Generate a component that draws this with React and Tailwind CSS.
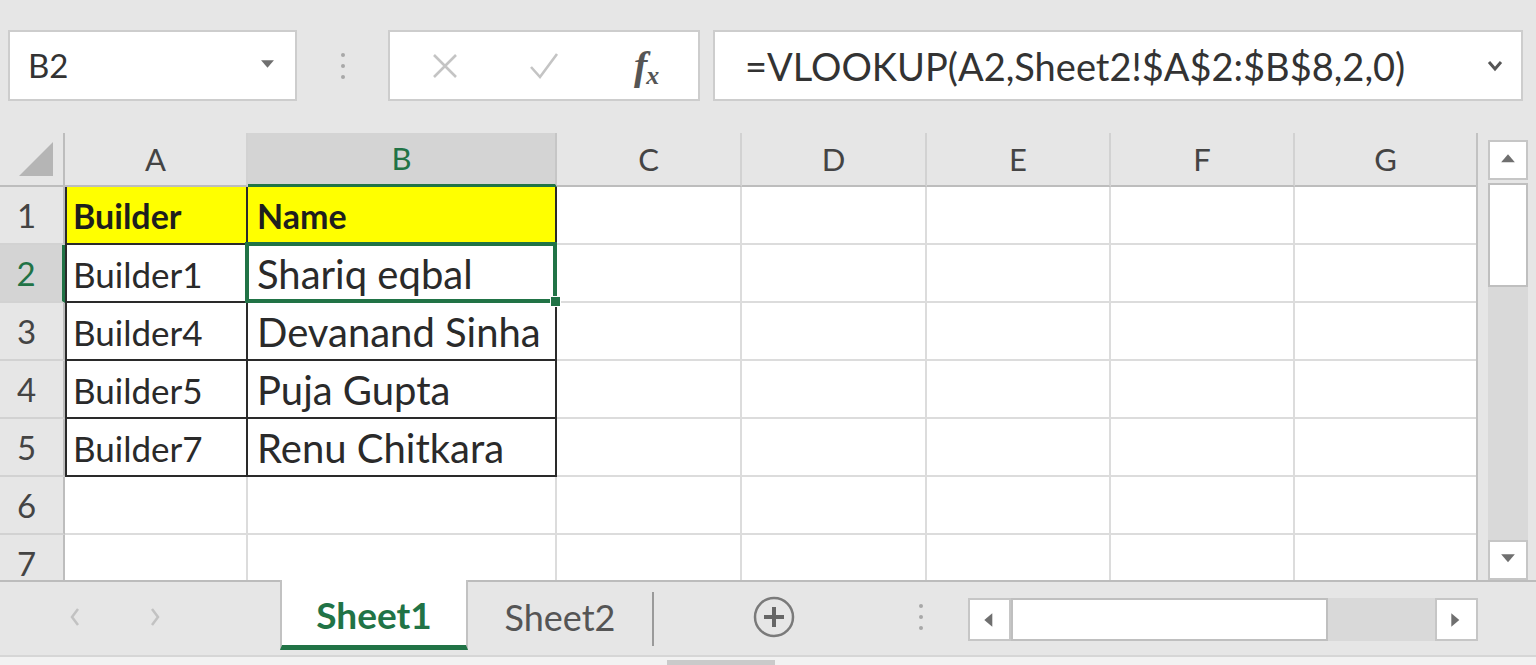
import React from "react";

const colHeads = [
  { k: "A", w: 183 },
  { k: "B", w: 309 },
  { k: "C", w: 185 },
  { k: "D", w: 185 },
  { k: "E", w: 184 },
  { k: "F", w: 184 },
  { k: "G", w: 183 },
];

const data = [
  ["Builder", "Name"],
  ["Builder1", "Shariq eqbal"],
  ["Builder4", "Devanand Sinha"],
  ["Builder5", "Puja Gupta"],
  ["Builder7", "Renu Chitkara"],
  ["", ""],
  ["", ""],
];

const Tri = ({ dir, className }) => {
  const pts = {
    up: "1,9 7,2 13,9",
    down: "1,2 13,2 7,9",
    left: "9,1 9,13 2,7",
    right: "2,1 2,13 9,7",
  }[dir];
  return (
    <svg viewBox="0 0 14 14" className={className}>
      <polygon points={pts} fill="#6f6f6f" />
    </svg>
  );
};

const Dots = ({ className }) => (
  <div className={"flex flex-col gap-[7px] " + (className || "")}>
    <span className="w-[4px] h-[4px] rounded-full bg-[#a8a8a8]" />
    <span className="w-[4px] h-[4px] rounded-full bg-[#a8a8a8]" />
    <span className="w-[4px] h-[4px] rounded-full bg-[#a8a8a8]" />
  </div>
);

function FormulaBar() {
  return (
    <div className="h-[133px] flex items-start pt-[30px] pl-[8px] shrink-0">
      <div className="w-[289px] h-[71px] bg-white border-2 border-[#cdcdcd] flex items-center pl-[18px] pr-[20px]">
        <span className="text-[33px] text-[#333] leading-none">B2</span>
        <Tri dir="down" className="w-[15px] h-[15px] ml-auto" />
      </div>
      <div className="w-[91px] h-[71px] flex items-center justify-center">
        <Dots />
      </div>
      <div className="w-[312px] h-[71px] bg-white border-2 border-[#cdcdcd] flex items-center">
        <div className="w-[104px] flex justify-center pl-[8px]">
          <svg viewBox="0 0 30 30" className="w-[30px] h-[30px]">
            <path d="M4 4 L26 26 M26 4 L4 26" stroke="#c4c4c4" strokeWidth="2.6" fill="none" />
          </svg>
        </div>
        <div className="w-[104px] flex justify-center">
          <svg viewBox="0 0 32 30" className="w-[32px] h-[30px]">
            <path d="M3 16 L12 26 L29 3" stroke="#c4c4c4" strokeWidth="2.6" fill="none" />
          </svg>
        </div>
        <div className="w-[104px] flex justify-center items-end font-['Liberation_Serif'] italic text-[#555] leading-none">
          <span className="text-[40px] font-bold">f</span>
          <span className="text-[26px] font-bold -ml-[1px] translate-y-[3px]">x</span>
        </div>
      </div>
      <div className="w-[810px] h-[71px] ml-[13px] bg-white border-2 border-[#cdcdcd] flex items-center pl-[30px] pr-[18px]">
        <span className="text-[38px] text-[#333] leading-none">=VLOOKUP(A2,Sheet2!$A$2:$B$8,2,0)</span>
        <svg viewBox="0 0 16 12" className="w-[16px] h-[12px] ml-auto">
          <polyline points="2,2 8,9 14,2" stroke="#555" strokeWidth="3" fill="none" />
        </svg>
      </div>
    </div>
  );
}

function Grid() {
  return (
    <div className="grid grid-cols-[65px_183px_309px_185px_185px_184px_184px_183px] grid-rows-[54px_repeat(7,58px)] w-[1478px] h-[447px] overflow-hidden border-r-2 border-r-[#c2c2c2]">
      <div className="bg-[#e6e6e6] border-r-2 border-b-2 border-[#bdbdbd] flex items-end justify-end pr-[10px] pb-[9px]">
        <svg viewBox="0 0 34 34" className="w-[34px] h-[34px]">
          <polygon points="34,0 34,34 0,34" fill="#b5b5b5" />
        </svg>
      </div>
      {colHeads.map((c) =>
        c.k === "B" ? (
          <div key={c.k} className="bg-[#d4d4d4] border-r-2 border-r-[#c6c6c6] border-b-[3px] border-b-[#217346] flex items-center justify-center text-[31px] text-[#217346] leading-none">
            {c.k}
          </div>
        ) : (
          <div key={c.k} className="bg-[#e6e6e6] border-r-2 border-r-[#d2d2d2] border-b-2 border-b-[#bdbdbd] flex items-center justify-center text-[31px] text-[#444] leading-none">
            {c.k}
          </div>
        )
      )}
      {data.map((row, r) => (
        <React.Fragment key={r}>
          <div
            className={
              r === 1
                ? "bg-[#d4d4d4] border-r-[3px] border-r-[#217346] border-b-2 border-b-[#d2d2d2] flex items-center justify-center pr-[10px] text-[33px] text-[#217346] leading-none"
                : "bg-[#e6e6e6] border-r-2 border-r-[#bdbdbd] border-b-2 border-b-[#d2d2d2] flex items-center justify-center pr-[10px] text-[33px] text-[#444] leading-none"
            }
          >
            {r + 1}
          </div>
          {colHeads.map((c, ci) => {
            const inData = r < 5 && ci < 2;
            if (!inData) {
              return <div key={c.k} className="bg-white border-r-2 border-b-2 border-[#dcdcdc]" />;
            }
            const val = row[ci];
            const bg = r === 0 ? "bg-[#ffff00]" : "bg-white";
            const left = ci === 0 ? " border-l-2 border-l-[#2a2a2a]" : "";
            const txt =
              r === 0
                ? "text-[34px] font-bold text-[#1e1e1e]"
                : ci === 0
                ? "text-[35px] text-[#2a2a2a]"
                : "text-[40px] text-[#2a2a2a]";
            const pad = ci === 0 ? " pl-[6px]" : " pl-[9px]";
            return (
              <div key={c.k} className={"relative flex items-center border-r-2 border-b-2 border-[#2a2a2a] leading-none " + bg + left + pad + " " + txt}>
                <span className="pt-[2px]">{val}</span>
                {r === 1 && ci === 1 && (
                  <div className="absolute -left-[3px] -top-[3px] -right-[2px] -bottom-[2px] border-[4px] border-[#217346] z-10">
                    <div className="absolute -right-[8px] -bottom-[8px] w-[11px] h-[11px] bg-[#217346] border border-white" />
                  </div>
                )}
              </div>
            );
          })}
        </React.Fragment>
      ))}
    </div>
  );
}

function VScroll() {
  return (
    <div className="flex-1 flex flex-col pt-[7px] pl-[10px]">
      <div className="w-[40px] h-[40px] bg-white border-2 border-[#c6c6c6] flex items-center justify-center">
        <Tri dir="up" className="w-[16px] h-[16px]" />
      </div>
      <div className="w-[40px] h-[104px] bg-white border-2 border-[#bfbfbf] mt-[3px]" />
      <div className="w-[40px] flex-1 bg-[#d9d9d9]" />
      <div className="w-[40px] h-[40px] bg-white border-2 border-[#c6c6c6] flex items-center justify-center">
        <Tri dir="down" className="w-[16px] h-[16px]" />
      </div>
    </div>
  );
}

function SheetTabs() {
  return (
    <div className="flex-1 flex flex-col border-t-2 border-t-[#bcbcbc]">
      <div className="h-[73px] flex items-start">
        <div className="w-[280px] h-[70px] flex items-center">
          <svg viewBox="0 0 12 20" className="w-[12px] h-[20px] ml-[69px]">
            <polyline points="9,2 3,10 9,18" stroke="#c2c2c2" strokeWidth="2.5" fill="none" />
          </svg>
          <svg viewBox="0 0 12 20" className="w-[12px] h-[20px] ml-[68px]">
            <polyline points="3,2 9,10 3,18" stroke="#c2c2c2" strokeWidth="2.5" fill="none" />
          </svg>
        </div>
        <div className="w-[188px] h-[70px] -mt-[2px] bg-white border-x-2 border-x-[#c2c2c2] border-b-[5px] border-b-[#217346] flex items-center justify-center">
          <span className="text-[37px] font-bold text-[#217346] leading-none pt-[3px]">Sheet1</span>
        </div>
        <div className="w-[184px] h-[70px] flex items-center justify-center">
          <span className="text-[36px] text-[#555] leading-none">Sheet2</span>
        </div>
        <div className="w-[2px] h-[54px] mt-[10px] bg-[#9a9a9a]" />
        <div className="w-[238px] h-[70px] flex items-center justify-center pl-[2px]">
          <svg viewBox="0 0 42 42" className="w-[42px] h-[42px]">
            <circle cx="21" cy="21" r="19" stroke="#7a7a7a" strokeWidth="2.5" fill="none" />
            <path d="M21 11 V31 M11 21 H31" stroke="#666" strokeWidth="4" />
          </svg>
        </div>
        <div className="w-[58px] h-[70px] flex items-center justify-center">
          <Dots />
        </div>
        <div className="w-[510px] h-[43px] mt-[16px] ml-[18px] flex">
          <div className="w-[43px] h-[43px] bg-white border-2 border-[#c6c6c6] flex items-center justify-center">
            <Tri dir="left" className="w-[16px] h-[16px]" />
          </div>
          <div className="w-[317px] h-[43px] bg-white border-2 border-[#bfbfbf]" />
          <div className="flex-1 h-[43px] bg-[#d9d9d9]" />
          <div className="w-[43px] h-[43px] bg-white border-2 border-[#c6c6c6] flex items-center justify-center">
            <Tri dir="right" className="w-[16px] h-[16px]" />
          </div>
        </div>
      </div>
      <div className="flex-1 bg-[#f2f2f2] border-t-2 border-t-[#d6d6d6] relative">
        <div className="absolute left-[667px] bottom-0 w-[108px] h-[5px] bg-[#cacaca]" />
      </div>
    </div>
  );
}

export default function App() {
  return (
    <div className="w-[1536px] h-[665px] bg-[#e6e6e6] overflow-hidden flex flex-col font-['Lato','Liberation_Sans',sans-serif]">
      <FormulaBar />
      <div className="flex h-[447px] shrink-0">
        <Grid />
        <VScroll />
      </div>
      <SheetTabs />
    </div>
  );
}
